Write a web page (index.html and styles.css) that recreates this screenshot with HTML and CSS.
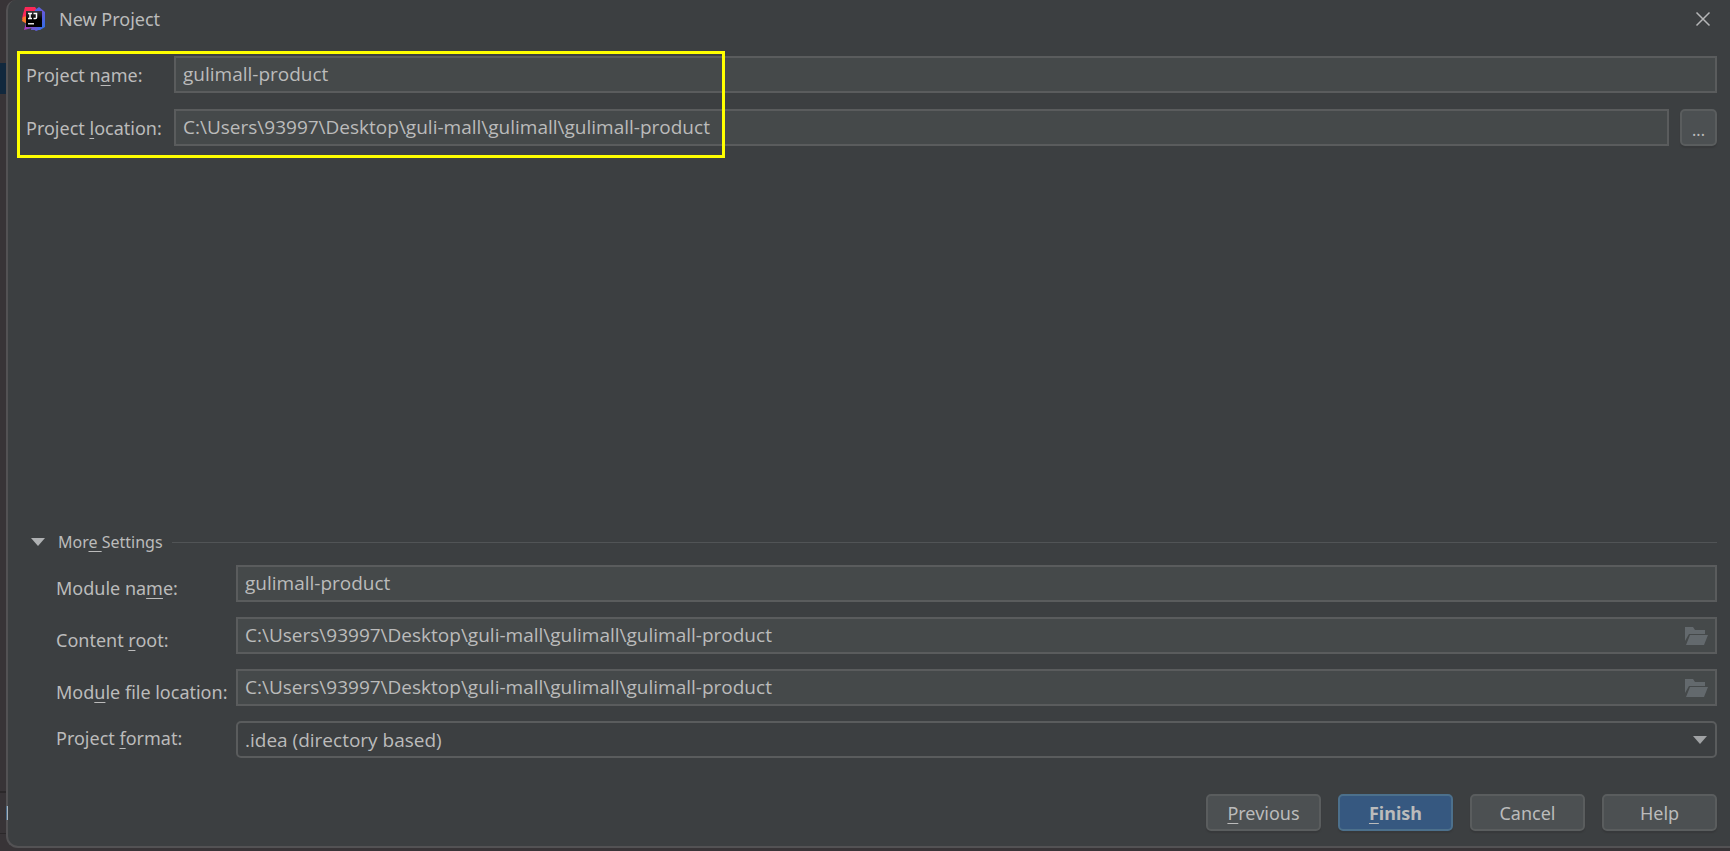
FILE: index.html
```html
<!DOCTYPE html>
<html lang="en">
<head>
<meta charset="utf-8">
<title>New Project</title>
<link rel="stylesheet" href="styles.css">
</head>
<body>
<div class="backdrop" aria-hidden="true">
  <span class="backdrop-selection"></span>
  <span class="backdrop-status"></span>
</div>
<main class="dialog">
  <header class="titlebar">
    <svg class="logo" viewBox="0 0 24 24" aria-hidden="true">
      <defs>
        <linearGradient id="blue" x1="0" y1="0" x2="1" y2="1"><stop offset="0" stop-color="#2f7bea"/><stop offset=".5" stop-color="#6b57d8"/><stop offset="1" stop-color="#2673e8"/></linearGradient>
        <linearGradient id="tile" x1="0" y1="0" x2="0" y2="1"><stop offset="0" stop-color="#36363a"/><stop offset=".5" stop-color="#000"/></linearGradient>
        <linearGradient id="violet" x1="0" y1="0" x2="1" y2="0"><stop offset="0" stop-color="#b236b8"/><stop offset="1" stop-color="#3f6fe8"/></linearGradient>
      </defs>
      <path d="M3 0h10l3 4-8 8H0l1-5z" fill="#fb2857"/>
      <path d="M1 10l4-1v8l-5-3z" fill="#f97a2a"/>
      <path d="M13 3l4-3 6 5v15l-5 3H9z" fill="url(#blue)"/>
      <path d="M4 16l-2 7 8-2 4 3 5-2-3-6z" fill="url(#violet)"/>
      <path d="M4 4h16v16H4z" fill="url(#tile)"/>
      <path d="M6 6.500h4M8 6.500v5M6 11.500h4M11.500 6.500h3v4q0 1-1 1h-2" fill="none" stroke="#fff" stroke-width="1.500"/>
      <path d="M6 16h6v1.500H6z" fill="#ddd"/>
    </svg>
    <h1 class="title">New Project</h1>
    <button class="close" type="button" aria-label="Close">
      <svg viewBox="0 0 16 16" aria-hidden="true"><path d="M1.500 1.500l13 13M14.500 1.500l-13 13"/></svg>
    </button>
  </header>

  <form class="form">
    <section class="project">
      <label for="project-name">Project n<u>a</u>me:</label>
      <input class="field" id="project-name" type="text" value="gulimall-product">
      <label for="project-location">Project <u>l</u>ocation:</label>
      <div class="with-browse">
        <input class="field" id="project-location" type="text" value="C:\Users\93997\Desktop\guli-mall\gulimall\gulimall-product">
        <button class="button browse" type="button" aria-label="Browse">...</button>
      </div>
      <span class="highlight"></span>
    </section>

    <section class="more">
      <h2 class="more-heading">
        <button class="toggle" type="button" aria-expanded="true">
          <svg viewBox="0 0 14 8" aria-hidden="true"><path d="M0 0h14L7 8z"/></svg>
          <span>Mor<u>e </u>Settings</span>
        </button>
      </h2>
      <div class="settings">
        <label for="module-name">Module na<u>m</u>e:</label>
        <input class="field" id="module-name" type="text" value="gulimall-product">
        <label for="content-root">Content <u>r</u>oot:</label>
        <div class="path">
          <input class="field" id="content-root" type="text" value="C:\Users\93997\Desktop\guli-mall\gulimall\gulimall-product">
          <button class="folder" type="button" aria-label="Browse content root">
            <svg viewBox="0 0 23 18" aria-hidden="true"><path d="M0 0h8l2 3h10v4H4L0 14zM5 8h18l-4 10H1z"/></svg>
          </button>
        </div>
        <label for="module-file">Mod<u>u</u>le file location:</label>
        <div class="path">
          <input class="field" id="module-file" type="text" value="C:\Users\93997\Desktop\guli-mall\gulimall\gulimall-product">
          <button class="folder" type="button" aria-label="Browse module file location">
            <svg viewBox="0 0 23 18" aria-hidden="true"><path d="M0 0h8l2 3h10v4H4L0 14zM5 8h18l-4 10H1z"/></svg>
          </button>
        </div>
        <label class="format-label" for="format">Project <u>f</u>ormat:</label>
        <div class="path">
          <select class="field select" id="format"><option>.idea (directory based)</option></select>
          <svg class="arrow" viewBox="0 0 14 8" aria-hidden="true"><path d="M0 0h14L7 8z"/></svg>
        </div>
      </div>
    </section>

    <footer class="actions">
      <button class="button" type="button"><span><u>P</u>revious</span></button>
      <button class="button primary" type="submit"><span><u>F</u>inish</span></button>
      <button class="button" type="button">Cancel</button>
      <button class="button" type="button">Help</button>
    </footer>
  </form>
</main>
</body>
</html>
```
FILE: styles.css
```css
* { box-sizing: border-box; }

body {
  margin: 0;
  min-height: 100vh;
  display: flex;
  position: relative;
  background: #383437;
  color: #bbbbbb;
  font: 18px/24px "Noto Sans", "Open Sans", sans-serif;
}

button, input, select { font: inherit; color: inherit; margin: 0; }
button { padding: 0; border: 0; background: none; }
u { text-decoration: underline; text-decoration-thickness: 1px; text-underline-offset: 3px; }

.backdrop { position: absolute; inset: 0 auto 0 0; width: 6px; }
.backdrop-selection { position: absolute; top: 63px; left: 0; width: 6px; height: 31px; background: #11283d; }
.backdrop-status { position: absolute; bottom: 17px; left: 0; width: 6px; height: 43px; border: solid #2b282a; border-width: 2px 0 1px; }
.backdrop-status::after { content: ""; position: absolute; z-index: 1; top: 13px; left: 6px; width: 2px; height: 14px; background: linear-gradient(90deg, #4a6a88 50%, #a9b3bb 50%); }

.dialog {
  flex: 1;
  display: flex;
  flex-direction: column;
  margin: 0 0 3px 6px;
  border: solid #535254;
  border-width: 0 0 2px 2px;
  border-radius: 10px 0 0 12px;
  background: #3c3f41;
}

.titlebar { display: flex; align-items: center; height: 38px; padding: 0 19px 0 14px; }
.logo { width: 24px; height: 24px; }
.title { flex: 1; margin: 0 0 0 13px; font-size: 18px; font-weight: 400; }
.close { display: flex; }
.close svg { width: 16px; height: 16px; fill: none; stroke: #b5b6b7; stroke-width: 1.5; }

.form { flex: 1; display: flex; flex-direction: column; padding: 18px 13px 15px 18px; }

.project {
  position: relative;
  display: grid;
  grid-template-columns: 148px 1fr;
  row-gap: 16px;
  align-items: center;
}
.with-browse { display: flex; gap: 11px; }
.highlight {
  position: absolute;
  top: -5px;
  left: -9px;
  width: 708px;
  height: 107px;
  border: 3px solid #ffff00;
  pointer-events: none;
}

.field {
  display: block;
  width: 100%;
  height: 37px;
  padding: 0 7px 2px;
  border: 2px solid #5a5c5d;
  border-radius: 0;
  outline: 0;
  background: #45494a;
  font-family: "Open Sans", "Noto Sans", sans-serif;
  font-size: 19px;
}
.select { appearance: none; padding: 0 7px; border-radius: 5px; background: #3c3f41; }

.button {
  width: 115px;
  height: 37px;
  border: 2px solid #5a5d5e;
  border-radius: 5px;
  background: #4c5052;
  box-shadow: 0 2px 1px #37393b;
}
.primary { border-color: #4c708c; background: #365880; font-weight: 700; }
.browse { flex: none; width: 37px; padding-top: 4px; font-size: 16px; }

.more { margin-top: auto; }
.more-heading { display: flex; align-items: center; gap: 9px; margin: 0 0 11px; font-size: 16px; font-weight: 400; }
.more-heading::after { content: ""; flex: 1; height: 1px; background: #515456; }
.toggle { display: flex; align-items: center; gap: 13px; padding-left: 5px; }
.toggle svg { width: 14px; height: 8px; fill: #afb1b3; }

.settings {
  display: grid;
  grid-template-columns: 180px 1fr;
  row-gap: 15px;
  align-items: center;
  padding-left: 30px;
}
.settings label { padding-top: 8px; white-space: nowrap; }
.settings .format-label { padding: 0 0 4px; }
.path { position: relative; }
.folder { position: absolute; top: 10px; right: 9px; display: flex; }
.folder svg { width: 23px; height: 18px; fill: #63696d; }
.arrow { position: absolute; top: 15px; right: 10px; width: 14px; height: 8px; fill: #a0a2a4; pointer-events: none; }

.actions { display: flex; justify-content: flex-end; gap: 17px; margin-top: 36px; }
```
